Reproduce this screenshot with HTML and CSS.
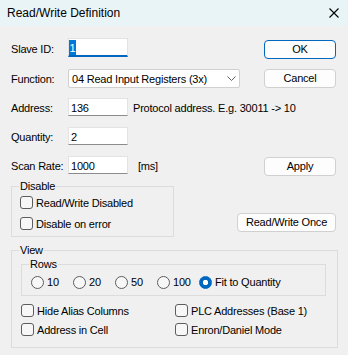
FILE: index.html
```html
<!DOCTYPE html>
<html>
<head>
    <meta name='viewport' content='width=device-width, initial-scale=1.0'>
    <title>Read/Write Definition</title>
    <link rel="stylesheet" href="styles.css">
</head>
<body>
    <div class='titlebar'>
        <span class='title'>Read/Write Definition</span>
        <svg class='close' width='10' height='10' viewBox='0 0 10 10'>
            <path d='M0.5 0.5 L9.5 9.5 M9.5 0.5 L0.5 9.5' stroke='#000' stroke-width='1.1' fill='none'/>
        </svg>
    </div>
    <div class='content'>
        <div class='row r1'>
            <span class='lbl'>Slave ID:</span>
            <div class='edit focused'><span class='sel'>1</span></div>
            <button class='btn default'>OK</button>
        </div>
        <div class='row r2'>
            <span class='lbl'>Function:</span>
            <div class='combo'>
                <span>04 Read Input Registers (3x)</span>
                <svg width='9' height='5' viewBox='0 0 9 5'>
                    <path d='M0.5 0.5 L4.5 4.5 L8.5 0.5' stroke='#606060' stroke-width='1' fill='none'/>
                </svg>
            </div>
            <button class='btn'>Cancel</button>
        </div>
        <div class='row r3'>
            <span class='lbl'>Address:</span>
            <div class='edit'>136</div>
            <span class='note'>Protocol address. E.g. 30011 -&gt; 10</span>
        </div>
        <div class='row r4'>
            <span class='lbl'>Quantity:</span>
            <div class='edit'>2</div>
        </div>
        <div class='row r5'>
            <span class='lbl'>Scan Rate:</span>
            <div class='edit'>1000</div>
            <span class='note ms'>[ms]</span>
            <button class='btn apply'>Apply</button>
        </div>

        <div class='disable-row'>
            <fieldset class='group disable'>
                <legend>Disable</legend>
                <div class='checks'>
                    <div class='check'><span class='box'></span>Read/Write Disabled</div>
                    <div class='check'><span class='box'></span>Disable on error</div>
                </div>
            </fieldset>
            <button class='btn once'>Read/Write Once</button>
        </div>

        <fieldset class='group view'>
            <legend>View</legend>
            <fieldset class='group rows'>
                <legend>Rows</legend>
                <div class='radios'>
                    <div class='opt'><span class='radio'></span>10</div>
                    <div class='opt'><span class='radio'></span>20</div>
                    <div class='opt'><span class='radio'></span>50</div>
                    <div class='opt'><span class='radio'></span>100</div>
                    <div class='opt'><span class='radio on'></span>Fit to Quantity</div>
                </div>
            </fieldset>
            <div class='view-checks'>
                <div class='check'><span class='box'></span>Hide Alias Columns</div>
                <div class='check'><span class='box'></span>PLC Addresses (Base 1)</div>
                <div class='check'><span class='box'></span>Address in Cell</div>
                <div class='check'><span class='box'></span>Enron/Daniel Mode</div>
            </div>
        </fieldset>
    </div>
</body>
</html>
```

FILE: styles.css
```css
* {
    box-sizing: border-box;
}
body {
    margin: 0;
    width: 348px;
    height: 355px;
    overflow: hidden;
    background-color: #f0f0f0;
    font-family: "Liberation Sans", Arial, sans-serif;
    font-size: 11px;
    letter-spacing: -0.2px;
    color: #000;
}
.titlebar {
    height: 26px;
    background-color: #e9f4f7;
    display: flex;
    align-items: center;
    justify-content: space-between;
    padding: 0 9px 0 7px;
}
.title {
    font-size: 12px;
    letter-spacing: 0;
}
.close {
    display: block;
}
.content {
    padding: 12px 10px 0 11px;
}
.row {
    display: flex;
    align-items: flex-start;
}
.r1 { height: 21px; margin-bottom: 10px; }
.r2 { height: 19px; margin-bottom: 10px; }
.r3 { height: 18px; margin-bottom: 11px; }
.r4 { height: 18px; margin-bottom: 11px; }
.r5 { height: 20px; margin-bottom: 4px; }
.lbl {
    width: 57px;
    line-height: 13px;
    padding-top: 4px;
}
.r1 .lbl {
    padding-top: 5px;
}
.edit {
    width: 60px;
    height: 18px;
    background-color: #fff;
    border: 1px solid #e3e3e3;
    border-bottom-color: #8c8c8c;
    line-height: 13px;
    padding: 3px 2px 0;
}
.edit.focused {
    height: 19px;
    border-bottom: 2px solid #0067c0;
    padding: 1px 0 0;
}
.sel {
    display: inline-block;
    width: 7px;
    height: 15px;
    line-height: 15px;
    text-align: center;
    background-color: #0078d7;
    color: #fff;
    padding-top: 1px;
}
.combo {
    width: 172px;
    height: 19px;
    background-color: #fff;
    border: 1px solid #d0d0d0;
    border-radius: 2px;
    display: flex;
    align-items: center;
    justify-content: space-between;
    padding: 0 3px 0 3px;
    line-height: 13px;
}
.combo span {
    padding-top: 1px;
}
.note {
    margin-left: 5px;
    line-height: 13px;
    padding-top: 4px;
}
.ms {
    margin-left: 10px;
}
.btn {
    font-family: inherit;
    font-size: 11px;
    letter-spacing: -0.2px;
    color: #000;
    width: 72px;
    height: 19px;
    line-height: 17px;
    padding: 0;
    margin: 0 2px 0 auto;
    background-color: #fdfdfd;
    border: 1px solid #d0d0d0;
    border-radius: 4px;
}
.default {
    margin-top: 2px;
    border-color: #0067c0;
}
.apply {
    margin-top: 1px;
}
.disable-row {
    display: flex;
    align-items: flex-end;
    margin-bottom: 7px;
}
.group {
    margin: 0;
    border: 1px solid #dcdcdc;
    min-width: 0;
}
.group legend {
    padding: 0 1px;
    line-height: 13px;
}
.disable {
    width: 163px;
    padding: 0 7px 4px;
}
.disable legend {
    margin-left: 0;
}
.checks {
    padding-top: 1px;
    padding-left: 1px;
    display: flex;
    flex-direction: column;
    gap: 4px;
}
.check {
    display: flex;
    align-items: center;
    gap: 3px;
    height: 17px;
}
.box {
    width: 13px;
    height: 13px;
    border: 1px solid #5d5d5d;
    border-radius: 3px;
    background-color: #f7f7f7;
}
.once {
    width: 99px;
    margin-bottom: 5px;
}
.view {
    padding: 0 11px 8px 9px;
}
.view > legend {
    margin-left: -2px;
}
.rows {
    margin-top: 1px;
    padding: 3px 8px 5px 9px;
}
.rows legend {
    margin-left: -2px;
}
.radios {
    display: grid;
    grid-template-columns: 42px 42px 42px 42px auto;
    height: 16px;
}
.opt {
    display: flex;
    align-items: center;
    gap: 3px;
}
.radio {
    width: 13px;
    height: 13px;
    border: 1px solid #5d5d5d;
    border-radius: 50%;
    background-color: #f7f7f7;
}
.radio.on {
    border-color: #0067c0;
    background: radial-gradient(circle, #fff 0, #fff 2.4px, #0067c0 3px);
}
.view-checks {
    margin-top: 5px;
    display: grid;
    grid-template-columns: 154px 1fr;
}
.view-checks .check {
    height: 19px;
}
```
